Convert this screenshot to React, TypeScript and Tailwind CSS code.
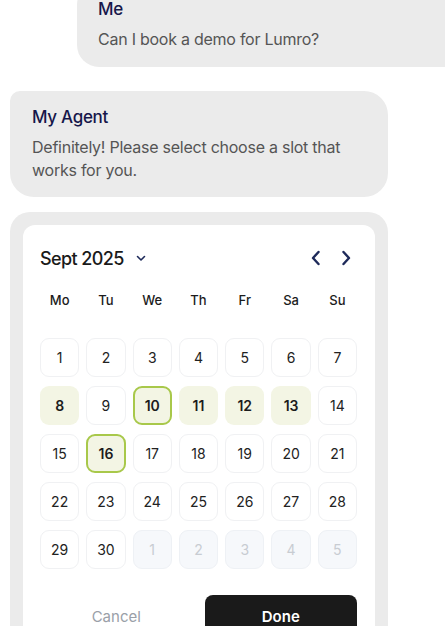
import React from "react";

type Day = { n: number; kind?: "avail" | "selected" | "muted" };

const rows: Day[][] = [
  [{ n: 1 }, { n: 2 }, { n: 3 }, { n: 4 }, { n: 5 }, { n: 6 }, { n: 7 }],
  [
    { n: 8, kind: "avail" },
    { n: 9 },
    { n: 10, kind: "selected" },
    { n: 11, kind: "avail" },
    { n: 12, kind: "avail" },
    { n: 13, kind: "avail" },
    { n: 14 },
  ],
  [{ n: 15 }, { n: 16, kind: "selected" }, { n: 17 }, { n: 18 }, { n: 19 }, { n: 20 }, { n: 21 }],
  [{ n: 22 }, { n: 23 }, { n: 24 }, { n: 25 }, { n: 26 }, { n: 27 }, { n: 28 }],
  [
    { n: 29 },
    { n: 30 },
    { n: 1, kind: "muted" },
    { n: 2, kind: "muted" },
    { n: 3, kind: "muted" },
    { n: 4, kind: "muted" },
    { n: 5, kind: "muted" },
  ],
];

const weekdays = ["Mo", "Tu", "We", "Th", "Fr", "Sa", "Su"];

function DayCell({ day }: { day: Day }) {
  if (day.kind === "selected") {
    return (
      <div className="flex h-[39px] items-center justify-center rounded-[9px] border-2 border-[#a8c84a] bg-[#f3f5e4] text-[14px] font-semibold text-[#1c1c1c]">
        {day.n}
      </div>
    );
  }
  if (day.kind === "avail") {
    return (
      <div className="flex h-[39px] items-center justify-center rounded-[9px] bg-[#f3f5e4] text-[14px] font-semibold text-[#1c1c1c]">
        {day.n}
      </div>
    );
  }
  if (day.kind === "muted") {
    return (
      <div className="flex h-[39px] items-center justify-center rounded-[9px] border border-[#eef1f5] bg-[#f6f8fb] text-[14px] text-[#c8ccd2]">
        {day.n}
      </div>
    );
  }
  return (
    <div className="flex h-[39px] items-center justify-center rounded-[9px] border border-[#f0f1f3] bg-white text-[14px] text-[#222]">
      {day.n}
    </div>
  );
}

export default function App() {
  return (
    <div
      className="h-[626px] w-[445px] overflow-hidden bg-white"
      style={{ fontFamily: "Inter, 'Noto Sans', sans-serif" }}
    >
      {/* my message */}
      <div className="-mt-[17px] ml-[77px] w-[400px] rounded-[22px] bg-[#ebebeb] pb-[16px] pl-[21px] pt-[15px]">
        <div className="text-[17px] font-medium leading-[22px] tracking-[-0.3px] text-[#16164a]">Me</div>
        <div className="mt-[8px] text-[16px] leading-[23px] tracking-[-0.25px] text-[#555]">
          Can I book a demo for Lumro?
        </div>
      </div>

      {/* agent message */}
      <div className="ml-[10px] mt-[24px] w-[378px] rounded-[24px] rounded-tl-[10px] bg-[#ebebeb] pb-[15px] pl-[22px] pr-[20px] pt-[15px]">
        <div className="text-[17px] font-medium leading-[22px] tracking-[-0.3px] text-[#16164a]">My Agent</div>
        <div className="mt-[8px] text-[16px] leading-[23px] tracking-[-0.25px] text-[#555]">
          Definitely! Please select choose a slot that works for you.
        </div>
      </div>

      {/* calendar */}
      <div className="ml-[10px] mt-[15px] w-[378px] rounded-[20px] bg-[#ebebeb] p-[13px] pb-0">
        <div className="rounded-t-[12px] bg-white pl-[17px] pr-[18px] pt-[23px] pb-[40px]">
          <div className="flex h-[20px] items-center justify-between">
            <div className="flex items-center">
              <span className="text-[18px] font-medium tracking-[-0.6px] text-[#1a1a1a]">Sept 2025</span>
              <svg className="ml-[12px]" width="10" height="7" viewBox="0 0 10 7" fill="none">
                <path d="M1.5 1.5 L5 5 L8.5 1.5" stroke="#1e2a5a" strokeWidth="1.6" strokeLinecap="round" strokeLinejoin="round" />
              </svg>
            </div>
            <div className="mr-[6px] flex items-center gap-[20px]">
              <svg width="10" height="16" viewBox="0 0 10 16" fill="none">
                <path d="M7.5 2 L2 8 L7.5 14" stroke="#1e2a5a" strokeWidth="2.4" strokeLinecap="round" strokeLinejoin="round" />
              </svg>
              <svg width="10" height="16" viewBox="0 0 10 16" fill="none">
                <path d="M2.5 2 L8 8 L2.5 14" stroke="#1e2a5a" strokeWidth="2.4" strokeLinecap="round" strokeLinejoin="round" />
              </svg>
            </div>
          </div>

          <div className="mt-[24px] grid grid-cols-7 gap-x-[7px]">
            {weekdays.map((w) => (
              <div key={w} className="text-center text-[13px] font-medium leading-[16px] text-[#1c1c1c]">
                {w}
              </div>
            ))}
          </div>

          <div className="mt-[30px] grid grid-cols-7 gap-x-[7px] gap-y-[9px]">
            {rows.flat().map((d, i) => (
              <DayCell key={i} day={d} />
            ))}
          </div>

          <div className="mt-[26px] flex gap-[12px]">
            <button className="flex h-[44px] flex-1 items-center justify-center text-[15px] text-[#9aa0a8]">
              Cancel
            </button>
            <button className="flex h-[44px] flex-1 items-center justify-center rounded-[8px] bg-[#1a1a1a] text-[15px] font-semibold text-white">
              Done
            </button>
          </div>
        </div>
      </div>
    </div>
  );
}
